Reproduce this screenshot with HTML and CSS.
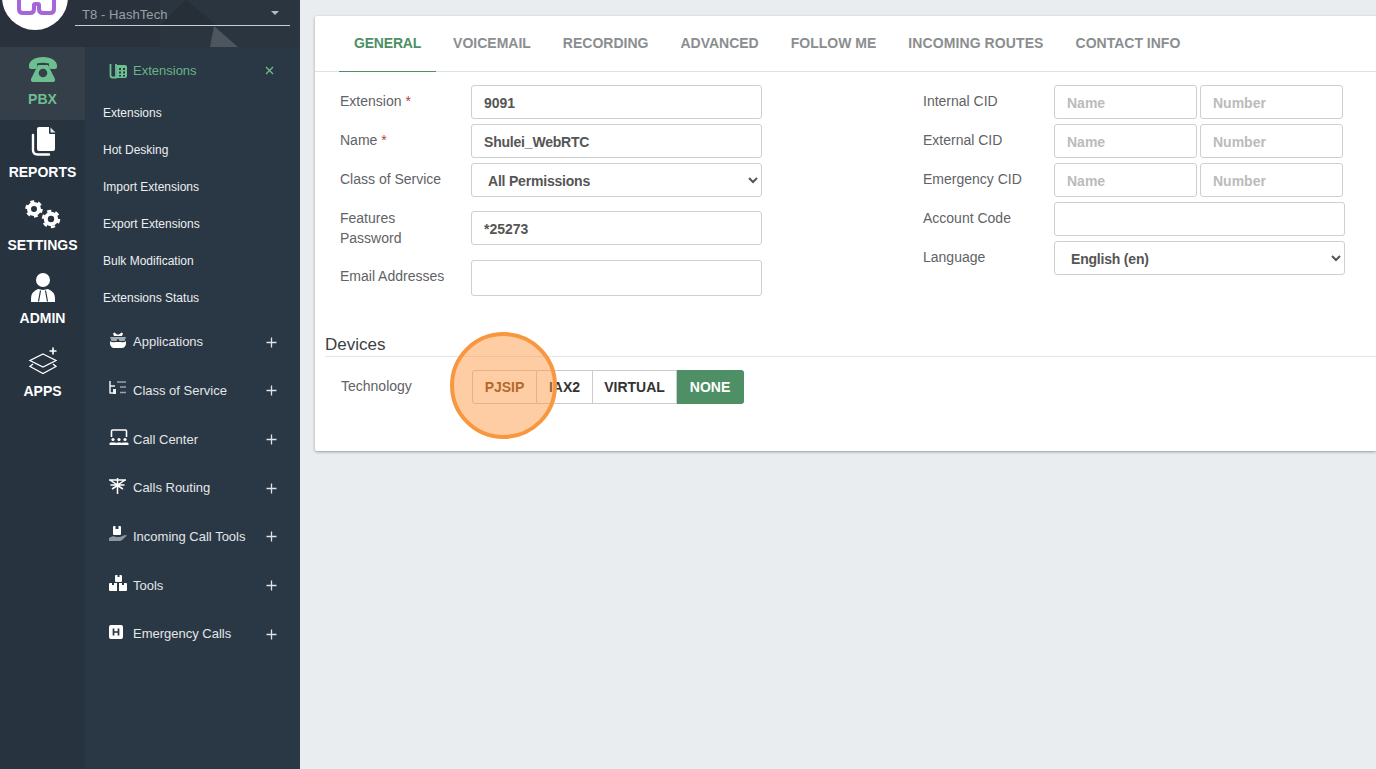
FILE: index.html
```html
<!DOCTYPE html>
<html lang="en">
<head>
<meta charset="utf-8">
<title>Extensions</title>
<link rel="stylesheet" href="styles.css">
</head>
<body>
<div class="app">
  <aside class="sidebar">
    <header class="brand">
      <svg class="brand-bg" viewBox="0 0 300 47" width="300" height="47"><polygon points="160,0 300,0 300,47 160,47" fill="#2a3540"/><polygon points="186,0 216,25 160,25" fill="#262e37"/><polygon points="214,26 238,47 210,47" fill="#4d555e"/></svg>
      <div class="logo"><svg viewBox="0 0 66 33" width="66" height="33"><path d="M17 5V16q0 4 4 4h7q4 0 4-4V12q0-1 1.500-1h2q1.500 0 1.500 1V16q0 4 4 4h7q4 0 4-4V5" fill="none" stroke="#a566d9" stroke-width="4"/></svg></div>
      <div class="tenant"><span>T8 - HashTech</span><i class="caret"></i></div>
    </header>
    <div class="side-body">
      <nav class="rail">
        <a class="rail-item active">
          <svg class="rail-icon" width="30" height="25" viewBox="0 0 30 25"><path d="M1 10C0 4 7 0 15 0s15 4 14 10c0 1-1 2-2 2h-4c-1 0-2-1-2-2V6.500c-4-1-8-1-12 0V10c0 1-1 2-2 2H3c-1 0-2-1-2-2z" fill="#6ebf8f"/><path d="M10 8h10l7 14q.500 3-2 3H5q-2.500 0-2-3z" fill="#6ebf8f"/><circle cx="15" cy="16" r="4.300" fill="#343f4a"/></svg>
          <span>PBX</span>
        </a>
        <a class="rail-item">
          <svg class="rail-icon" width="26" height="29" viewBox="0 0 26 29"><path d="M9 0h10v6q0 1 1 1h5v15q0 2-2 2H9q-2 0-2-2V2q0-2 2-2z" fill="#fff"/><path d="M20.500 0.500l5 5h-5z" fill="#e3e6e9"/><path d="M3 8v15q0 4.500 4.500 4.500H19" fill="none" stroke="#fff" stroke-width="2.400" stroke-linecap="round"/></svg>
          <span>REPORTS</span>
        </a>
        <a class="rail-item">
          <svg class="rail-icon" width="36" height="29" viewBox="0 0 36 29"><circle cx="9" cy="9" r="5" fill="none" stroke="#fff" stroke-width="4"/><circle cx="9" cy="9" r="7.500" fill="none" stroke="#fff" stroke-width="2.500" stroke-dasharray="3.900 3.950"/><circle cx="26" cy="19" r="5.200" fill="none" stroke="#fff" stroke-width="4"/><circle cx="26" cy="19" r="8" fill="none" stroke="#fff" stroke-width="2.500" stroke-dasharray="4.200 4.180"/></svg>
          <span>SETTINGS</span>
        </a>
        <a class="rail-item">
          <svg class="rail-icon" width="26" height="29" viewBox="0 0 26 29"><circle cx="13" cy="7" r="7" fill="#fff"/><path d="M1 29v-4q0-6 7-9l5 1 5-1q7 3 7 9v4z" fill="#fff"/><path d="M10.500 17.500L8.500 28.500M15.500 17.500l2 11" stroke="#2a3744" stroke-width="1.200" fill="none"/></svg>
          <span>ADMIN</span>
        </a>
        <a class="rail-item">
          <svg class="rail-icon" width="30" height="28" viewBox="0 0 30 28"><path d="M15 7l13 6.500L15 20 2 13.500z" fill="none" stroke="#fff" stroke-width="1.300"/><path d="M5 17l-3 2.500 13 7 13-7-3-2.500" fill="none" stroke="#fff" stroke-width="1.300"/><path d="M25 0.500v7M21.500 4h7" stroke="#fff" stroke-width="1.600"/></svg>
          <span>APPS</span>
        </a>
      </nav>
      <nav class="submenu">
        <div class="sub-head">
          <svg class="sub-icon" width="18" height="16" viewBox="0 0 18 16"><path d="M1.500 1v11.500q0 2 2 2H7V1" fill="none" stroke="#6ebf8f" stroke-width="1.800"/><path d="M8 2h8q2 0 2 2v9q0 2-2 2H8z" fill="#6ebf8f"/><path d="M10 5h2v2h-2zM14 5h2v2h-2zM10 8.500h2v2h-2zM14 8.500h2v2h-2zM10 12h2v1.500h-2zM14 12h2v1.500h-2z" fill="#2a3744"/></svg>
          <span>Extensions</span>
          <svg class="close" width="9" height="9" viewBox="0 0 9 9"><path d="M1 1l7 7M8 1l-7 7" stroke="#6ebf8f" stroke-width="1.300"/></svg>
        </div>
        <a class="sub-link">Extensions</a>
        <a class="sub-link">Hot Desking</a>
        <a class="sub-link">Import Extensions</a>
        <a class="sub-link">Export Extensions</a>
        <a class="sub-link">Bulk Modification</a>
        <a class="sub-link">Extensions Status</a>
        <a class="sub-item">
          <svg class="sub-icon" width="18" height="16" viewBox="0 0 18 16"><path d="M5 4L4 1.500 5.500 0.500 8 2.500h2L12.500 0.500 14 1.500 13 4z" fill="#fff"/><path d="M1 5h16l-1.500 4h-5l-1-2h-1l-1 2h-5z" fill="#a3abb2"/><path d="M1 9q2 2 5 1h6q3 1 5-1v3q-1 4-4 4H5q-3 0-4-4z" fill="#fff"/></svg>
          <span>Applications</span><svg class="plus" width="11" height="11" viewBox="0 0 11 11"><path d="M5.500 0.500v10M0.500 5.500h10" stroke="#dfe3e6" stroke-width="1.300"/></svg>
        </a>
        <a class="sub-item">
          <svg class="sub-icon" width="18" height="14" viewBox="0 0 18 14"><path d="M1 0v12.500M1 5h5M1 12h5" stroke="#eceff1" stroke-width="1.500" fill="none"/><path d="M4 8h3v5H4z" fill="#eceff1"/><path d="M8 1h9M11 6h6M11 11.500h6" stroke="#9aa3ab" stroke-width="1.300"/></svg>
          <span>Class of Service</span><svg class="plus" width="11" height="11" viewBox="0 0 11 11"><path d="M5.500 0.500v10M0.500 5.500h10" stroke="#dfe3e6" stroke-width="1.300"/></svg>
        </a>
        <a class="sub-item">
          <svg class="sub-icon" width="20" height="16" viewBox="0 0 20 16"><path d="M2.500 8V2q0-1 1-1h13q1 0 1 1v6" fill="none" stroke="#fff" stroke-width="1.600"/><circle cx="4" cy="10.500" r="1.600" fill="#fff"/><circle cx="10" cy="10.500" r="1.600" fill="#fff"/><circle cx="16" cy="10.500" r="1.600" fill="#fff"/><path d="M0.500 16v-1.500q0-1 1.500-1h4q1.500 0 1.500 1V16zM7.500 16v-1.500q0-1 1-1h3q1 0 1 1V16zM12.500 16v-1.500q0-1 1.500-1h4q1.500 0 1.500 1V16z" fill="#fff"/></svg>
          <span>Call Center</span><svg class="plus" width="11" height="11" viewBox="0 0 11 11"><path d="M5.500 0.500v10M0.500 5.500h10" stroke="#dfe3e6" stroke-width="1.300"/></svg>
        </a>
        <a class="sub-item">
          <svg class="sub-icon" width="17" height="16" viewBox="0 0 17 16"><path d="M8.500 0v16M0 2h17M1.500 7h14M1 2l7.500 5L16 2M3 11l5.500-3.500L14 11" stroke="#fff" stroke-width="1.500" fill="none"/></svg>
          <span>Calls Routing</span><svg class="plus" width="11" height="11" viewBox="0 0 11 11"><path d="M5.500 0.500v10M0.500 5.500h10" stroke="#dfe3e6" stroke-width="1.300"/></svg>
        </a>
        <a class="sub-item">
          <svg class="sub-icon" width="18" height="16" viewBox="0 0 18 16"><path d="M4 1q0-1 1-1h1.500v3h3V0H11q1 0 1 1v7q0 1-1 1H5q-1 0-1-1z" fill="#fff"/><path d="M0 12l3-1.500q2-.500 4 .500h4l5-2 2 .500-5 4.500q-1 1-2 1H0z" fill="#8d96a0"/></svg>
          <span>Incoming Call Tools</span><svg class="plus" width="11" height="11" viewBox="0 0 11 11"><path d="M5.500 0.500v10M0.500 5.500h10" stroke="#dfe3e6" stroke-width="1.300"/></svg>
        </a>
        <a class="sub-item">
          <svg class="sub-icon" width="18" height="16" viewBox="0 0 18 16"><path d="M6 1q0-1 1-1h5q1 0 1 1v5q0 1-1 1H7Q6 7 6 6zM0 9q0-1 1-1h7v8H1q-1 0-1-1zM10 8h7q1 0 1 1v6q0 1-1 1h-7z" fill="#fff"/><path d="M8.500 0h2v2h-2zM3 8h2v2H3zM13 8h2v2h-2z" fill="#2a3744"/></svg>
          <span>Tools</span><svg class="plus" width="11" height="11" viewBox="0 0 11 11"><path d="M5.500 0.500v10M0.500 5.500h10" stroke="#dfe3e6" stroke-width="1.300"/></svg>
        </a>
        <a class="sub-item">
          <svg class="sub-icon" width="14" height="14" viewBox="0 0 14 14"><rect width="14" height="14" rx="2" fill="#fff"/><path d="M4.500 3.500v7M9.500 3.500v7M4.500 7h5" stroke="#2a3744" stroke-width="1.700"/></svg>
          <span>Emergency Calls</span><svg class="plus" width="11" height="11" viewBox="0 0 11 11"><path d="M5.500 0.500v10M0.500 5.500h10" stroke="#dfe3e6" stroke-width="1.300"/></svg>
        </a>
      </nav>
    </div>
  </aside>
  <main class="main">
    <section class="card">
      <div class="tabs">
        <a class="tab active">GENERAL</a>
        <a class="tab">VOICEMAIL</a>
        <a class="tab">RECORDING</a>
        <a class="tab">ADVANCED</a>
        <a class="tab">FOLLOW ME</a>
        <a class="tab wide">INCOMING ROUTES</a>
        <a class="tab">CONTACT INFO</a>
      </div>
      <div class="form">
        <div class="col col-left">
          <div class="row"><label>Extension <b>*</b></label><input class="field num" value="9091"></div>
          <div class="row"><label>Name <b>*</b></label><input class="field" value="Shulei_WebRTC"></div>
          <div class="row"><label>Class of Service</label><select class="field"><option>All Permissions</option></select></div>
          <div class="row row-tall"><label>Features<br>Password</label><input class="field num" value="*25273"></div>
          <div class="row row-email"><label>Email Addresses</label><input class="field email"></div>
        </div>
        <div class="col col-right">
          <div class="row"><label>Internal CID</label><div class="pair"><input class="field" placeholder="Name"><input class="field" placeholder="Number"></div></div>
          <div class="row"><label>External CID</label><div class="pair"><input class="field" placeholder="Name"><input class="field" placeholder="Number"></div></div>
          <div class="row"><label>Emergency CID</label><div class="pair"><input class="field" placeholder="Name"><input class="field" placeholder="Number"></div></div>
          <div class="row"><label>Account Code</label><input class="field"></div>
          <div class="row"><label>Language</label><select class="field"><option>English (en)</option></select></div>
        </div>
      </div>
      <div class="devices">
        <h3>Devices</h3>
        <div class="tech">
          <label>Technology</label>
          <div class="btn-group">
            <button class="btn pj">PJSIP</button>
            <button class="btn iax">IAX2</button>
            <button class="btn virtual">VIRTUAL</button>
            <button class="btn none">NONE</button>
            <div class="spot"></div>
          </div>
        </div>
      </div>
    </section>
  </main>
</div>
</body>
</html>
```
FILE: styles.css
```css
* { box-sizing: border-box; }
html, body { margin: 0; height: 100%; overflow: hidden; }
body { font-family: "Liberation Sans", Arial, sans-serif; background: #e9edf0; color: #555; }
.app { display: flex; height: 769px; }

.sidebar { width: 300px; flex: none; background: #2a3744; display: flex; flex-direction: column; }
.brand { height: 47px; flex: none; position: relative; background: #29323c; overflow: hidden; display: flex; }
.brand-bg { position: absolute; left: 0; top: 0; }
.logo { position: relative; width: 66px; height: 66px; margin: -36px 0 0 2px; border-radius: 50%; background: #fff; padding-top: 33px; flex: none; }
.logo svg { display: block; margin-top: -4px; }
.tenant { position: relative; margin: 0 0 0 7px; width: 215px; height: 26px; border-bottom: 1px solid #c9ced2; display: flex; justify-content: space-between; padding: 7px 11px 0 7px; font-size: 13px; line-height: 16px; letter-spacing: .08px; color: #98a0a7; }
.caret { width: 0; height: 0; margin-top: 4px; border: 4px solid transparent; border-top: 4px solid #b5bbc0; border-bottom: 0; }

.side-body { flex: 1; display: flex; min-height: 0; }
.rail { width: 85px; flex: none; background: #27333f; display: flex; flex-direction: column; }
.rail-item { height: 73px; display: flex; flex-direction: column; align-items: center; justify-content: flex-end; padding-bottom: 13px; color: #fff; font-weight: 700; font-size: 14px; line-height: 16px; }
.rail-icon { display: block; margin-bottom: 8px; }
.rail-item.active { background: #343f4a; color: #6ebf8f; }
.rail-item.active .rail-icon { margin-bottom: 9px; }

.submenu { flex: 1; background: #2a3744; display: flex; flex-direction: column; }
.sub-head { height: 47.5px; display: flex; align-items: center; padding: 0 26px 0 24px; color: #69b487; font-size: 13px; }
.sub-head span { margin-left: 6px; }
.close { margin-left: auto; }
.sub-link { height: 37px; display: flex; align-items: center; padding-left: 18px; font-size: 12px; color: #eceff1; }
.sub-item { height: 48.67px; display: grid; grid-template-columns: 24px 1fr auto; align-items: center; padding: 0 23px 0 24px; font-size: 13px; color: #e3e6e9; }
.sub-item span { margin-top: 2px; white-space: nowrap; }
.sub-item .plus { margin-top: 3px; }
.sub-item .sub-icon { margin-top: -2px; }
.sub-icon { flex: none; }

.main { flex: 1; min-width: 0; padding: 16px 0 0 15px; }
.card { height: 435px; background: #fff; border-radius: 2px 0 0 2px; box-shadow: 0 1px 3px rgba(0, 0, 0, .35); }
.tabs { height: 56px; display: flex; padding-left: 24px; gap: 2px; border-bottom: 1px solid #dfe2e5; }
.tab { height: 56px; padding: 0 15px; line-height: 55px; font-size: 14px; font-weight: 700; color: #8b8e90; }
.tab.active { color: #4e8f65; letter-spacing: -.2px; border-bottom: 1px solid #4e8f65; }
.tab.wide { letter-spacing: .1px; }

.form { display: flex; padding: 13px 0 0 25px; height: 262px; }
.col { display: flex; flex-direction: column; gap: 5px; }
.col-left { width: 422px; }
.col-right { margin-left: 161px; width: 422px; }
.row { display: flex; align-items: center; min-height: 34px; }
.row label { width: 131px; flex: none; font-size: 14px; line-height: 20px; color: #5f6266; padding-bottom: 2px; }
.row label b { color: #b5403f; font-weight: 400; }
.row-tall { margin-top: 6px; height: 40px; }
.row-tall label { padding-bottom: 0; }
.row-email { margin-top: 7px; }
.row-email label { padding-bottom: 4px; }
.field { height: 34px; width: 291px; border: 1px solid #ccd0d3; border-radius: 3px; background: #fff; padding: 2px 12px 0; font: 700 14px "Liberation Sans", Arial, sans-serif; letter-spacing: -.2px; color: #555; outline: none; }
.field.num { letter-spacing: 0; }
.email { height: 36px; }
.field::placeholder { color: #bbb; opacity: 1; letter-spacing: 0; }
.pair { display: flex; gap: 3px; }
.pair .field { width: 143px; }

.devices { margin-left: 10px; }
.devices h3 { margin: 0; height: 23px; border-bottom: 1px solid #e4e6e8; font-size: 17px; font-weight: 400; line-height: 22px; color: #3d4043; }
.tech { display: flex; align-items: center; margin-top: 13px; padding-left: 16px; }
.tech label { width: 131px; font-size: 14px; color: #5f6266; padding-bottom: 2px; }
.btn-group { position: relative; display: flex; }
.btn { height: 34px; border: 1px solid #ccc; border-left: 0; background: #fff; font: 700 14px "Liberation Sans", Arial, sans-serif; color: #333; padding: 0; }
.pj { width: 65px; border-left: 1px solid #ccc; border-radius: 3px 0 0 3px; color: #6f3f18; }
.iax { width: 56px; }
.virtual { width: 84px; }
.none { width: 67px; background: #4e8f65; border-color: #4e8f65; color: #fff; border-radius: 0 3px 3px 0; }
.spot { position: absolute; left: -22px; top: -38px; width: 107px; height: 107px; border-radius: 50%; border: 4px solid #f79840; background: rgba(253, 150, 65, .48); }
```
